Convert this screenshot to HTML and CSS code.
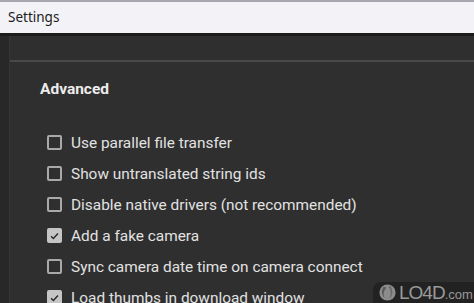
FILE: index.html
```html
<!DOCTYPE html>
<html lang="en">
<head>
    <meta charset="UTF-8">
    <title>Settings</title>
    <link rel="stylesheet" href="styles.css">
</head>
<body>
    <div class="window">
        <div class="titlebar">Settings</div>
        <div class="main">
            <div class="rail"></div>
            <div class="pane">
                <div class="section">
                    <h2>Advanced</h2>
                    <ul class="options">
                        <li><span class="box"></span>Use parallel file transfer</li>
                        <li><span class="box"></span>Show untranslated string ids</li>
                        <li><span class="box"></span>Disable native drivers (not recommended)</li>
                        <li><span class="box checked"><svg viewBox="0 0 12 12"><path d="M2.2 6.3 L4.8 8.8 L9.8 3.4" fill="none" stroke="#2b2b2b" stroke-width="1.6"/></svg></span>Add a fake camera</li>
                        <li><span class="box"></span>Sync camera date time on camera connect</li>
                        <li><span class="box checked"><svg viewBox="0 0 12 12"><path d="M2.2 6.3 L4.8 8.8 L9.8 3.4" fill="none" stroke="#2b2b2b" stroke-width="1.6"/></svg></span>Load thumbs in download window</li>
                    </ul>
                </div>
            </div>
        </div>
        <div class="watermark">
            <svg viewBox="0 0 20 20"><circle cx="10" cy="10" r="8.5" fill="#8c8c8c"/><path d="M6 4 C3 8 4 13 7 16 C5 12 6 8 9 5 Z" fill="#5a5a5a"/><path d="M13 3 C16 7 16 13 12 17 C14 12 14 8 11 4 Z" fill="#6a6a6a"/></svg>
            <span class="brand">LO4D<small>.com</small></span>
        </div>
    </div>
</body>
</html>
```

FILE: styles.css
```css
body {
    margin: 0;
    background-color: #2f2f2f;
    font-family: Roboto, "Liberation Sans", sans-serif;
    overflow: hidden;
}
.window {
    position: relative;
    width: 474px;
    height: 303px;
    display: flex;
    flex-direction: column;
    border-top: 2px solid #a6a6ae;
    box-sizing: border-box;
    overflow: hidden;
}
.titlebar {
    height: 34px;
    background-color: #f2f2f7;
    color: #1b1b1b;
    font-family: "Noto Sans", "Open Sans", sans-serif;
    font-size: 13.5px;
    line-height: 31px;
    padding-left: 8px;
    border-bottom: 3px solid #1c1c1c;
    box-sizing: border-box;
    flex-shrink: 0;
}
.main {
    flex: 1;
    display: flex;
}
.rail {
    width: 9px;
    background-color: #282828;
    border-right: 1px solid #363636;
}
.pane {
    flex: 1;
    padding-top: 24px;
}
.section {
    border-top: 2px solid #494949;
    padding-left: 30px;
}
.section h2 {
    margin: 0;
    padding-top: 16px;
    font-size: 15.5px;
    font-weight: bold;
    color: #ececec;
    line-height: 22px;
}
.options {
    list-style: none;
    margin: 0;
    padding: 27px 0 0 7px;
}
.options li {
    display: flex;
    align-items: center;
    height: 31px;
    font-size: 15.4px;
    color: #e2e2e2;
}
.box {
    width: 11px;
    height: 11px;
    border: 2px solid #a9a9a9;
    border-radius: 2px;
    margin-right: 9px;
    display: flex;
    align-items: center;
    justify-content: center;
}
.box.checked {
    background-color: #c5c5c5;
    border-color: #c5c5c5;
}
.box svg {
    width: 12px;
    height: 12px;
}
.watermark {
    position: absolute;
    right: 0;
    bottom: 0;
    width: 101px;
    height: 21px;
    background-color: #222;
    border-top-left-radius: 8px;
    display: flex;
    align-items: center;
    padding-left: 5px;
    box-sizing: border-box;
    color: #9a9a9a;
}
.watermark svg {
    width: 19px;
    height: 19px;
    margin-right: 2px;
}
.brand {
    font-family: "Liberation Sans", sans-serif;
    font-size: 19px;
    letter-spacing: -1px;
    line-height: 1;
}
.brand small {
    font-size: 13px;
    letter-spacing: 0;
}
```
